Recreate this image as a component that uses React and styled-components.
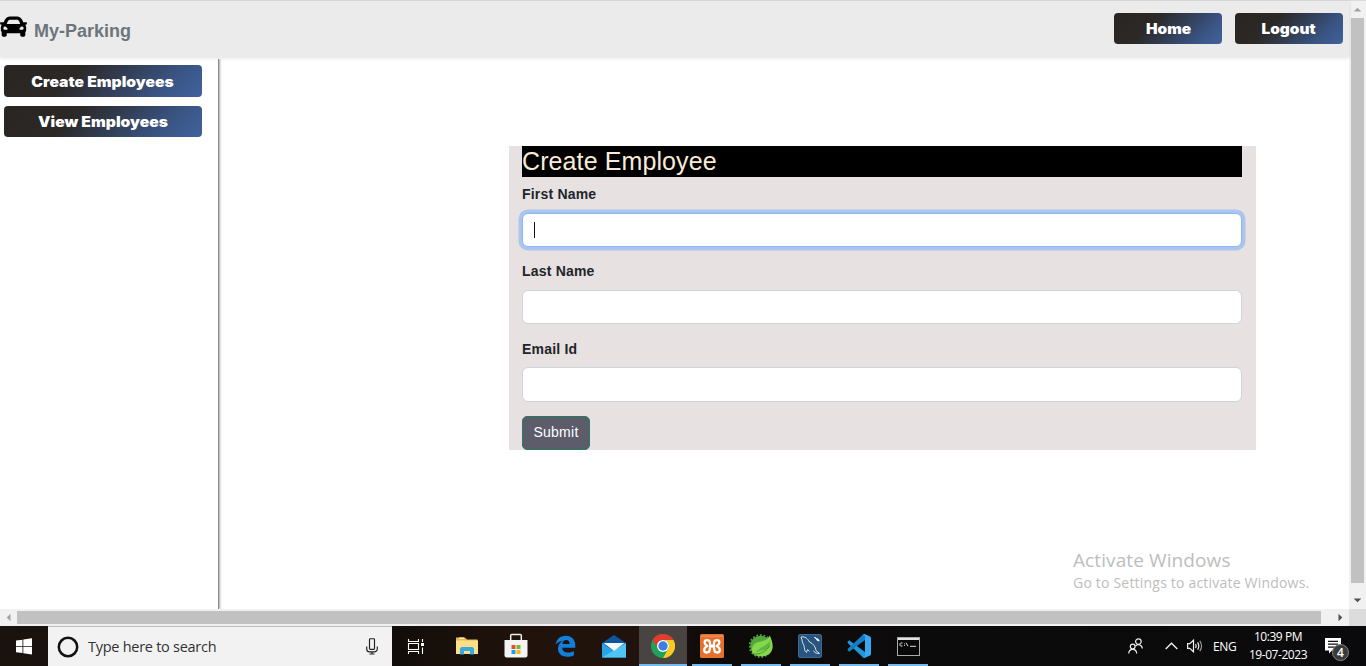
import React from "react";
import styled, { createGlobalStyle } from "styled-components";
import { FaCar } from "react-icons/fa";

const GlobalStyle = createGlobalStyle`
  *, *::before, *::after { box-sizing: border-box; }
  body { margin: 0; overflow: hidden; background: #fff; font-family: "Liberation Sans", Arial, sans-serif; }
  button, input { font-family: inherit; margin: 0; }
`;

const Screen = styled.div`
  width: 1366px;
  height: 666px;
  display: flex;
  flex-direction: column;
  position: relative;
`;
const Browser = styled.div`
  flex: 1;
  display: grid;
  grid-template-columns: 1349px 17px;
  grid-template-rows: 609px 17px;
`;
const Page = styled.div`
  display: flex;
  flex-direction: column;
  border-top: 1px solid #dcdcdc;
  min-height: 0;
`;
const Navbar = styled.header`
  height: 56px;
  flex: none;
  display: flex;
  align-items: flex-start;
  background: #ebebeb;
  box-shadow: 0 1px 4px rgba(0, 0, 0, 0.13);
  position: relative;
  padding: 12px 6px 0 0;
  gap: 13px;
`;
const Brand = styled.div`
  display: flex;
  flex: 1;
  gap: 7px;
  color: #6c757d;
  font-size: 18px;
  font-weight: 700;
  line-height: 22px;
  padding-top: 7px;
  svg { color: #000; width: 27px; height: 27px; margin-top: -7px; }
`;
const GradientButton = styled.button`
  width: ${(p) => p.$width}px;
  height: ${(p) => p.$height || 31}px;
  border: 0;
  border-radius: 4px;
  padding: 0;
  color: #fff;
  background: linear-gradient(135deg, #2a2522 0%, #2b2826 34%, #3a5585 80%, #40629c 100%);
  font: 900 14px/31px Inter, "Arial Black", sans-serif;
  white-space: nowrap;
`;
const WideText = styled.span`
  display: inline-block;
  transform: scaleX(${(p) => p.$scale || 1.1});
`;
const Body = styled.div`
  flex: 1;
  display: flex;
  min-height: 0;
`;
const Sidebar = styled.nav`
  width: 219px;
  margin-top: 2px;
  padding: 6px 0 0 4px;
  display: flex;
  flex-direction: column;
  gap: 9px;
  border-right: 1px solid #8a8a8a;
  box-shadow: 1px 0 2px rgba(0, 0, 0, 0.35);
  clip-path: inset(0 -5px 0 0);
`;
const Content = styled.main`
  flex: 1;
  padding: 89px 0 0 290px;
`;
const Form = styled.form`
  width: 747px;
  height: 304px;
  padding: 0 14px 0 13px;
  background: #e7e1e1;
`;
const Title = styled.h1`
  margin: 0 0 7px;
  height: 31px;
  font-size: 25px;
  line-height: 31px;
  font-weight: 400;
  letter-spacing: 0.1px;
  color: #faebd7;
  background: #000;
`;
const Field = styled.div`
  height: ${(p) => p.$height}px;
`;
const Label = styled.label`
  display: block;
  height: ${(p) => p.$height || 28}px;
  font-size: 14px;
  line-height: 20px;
  font-weight: 700;
  letter-spacing: ${(p) => p.$spacing || "0.2px"};
  color: #212529;
`;
const InputBox = styled.div`
  height: ${(p) => p.$height || 35}px;
  border-radius: 6px;
  border: 1px solid ${(p) => (p.$focused ? "#86b7fe" : "#ced4da")};
  background: #fff;
  box-shadow: ${(p) => (p.$focused ? "0 0 0 3.5px #adc5ec" : "none")};
  padding: 8px 11px;
`;
const Caret = styled.span`
  display: block;
  width: 1px;
  height: 16px;
  background: #111;
`;
const Submit = styled.button`
  display: block;
  width: 68px;
  height: 34px;
  padding: 0 0 2px;
  border: 1px solid #287a60;
  border-radius: 5px;
  background: #5c5c6b;
  color: #fff;
  font-size: 14px;
  letter-spacing: 0.25px;
`;

const VerticalBar = styled.div`
  background: #f1f1f1;
  border-top: 1px solid #dcdcdc;
  display: flex;
  flex-direction: column;
  align-items: center;
`;
const HorizontalBar = styled.div`
  background: #f1f1f1;
  display: flex;
  align-items: center;
`;
const Thumb = styled.div`
  background: #c1c1c1;
  flex: none;
  width: ${(p) => p.$w}px;
  height: ${(p) => p.$h}px;
`;
const ArrowCell = styled.div`
  width: 17px;
  height: 17px;
  display: grid;
  place-items: center;
  margin-top: ${(p) => (p.$end === "y" ? "auto" : 0)};
  margin-left: ${(p) => (p.$end === "x" ? "auto" : 0)};
`;
const Corner = styled.div`
  background: #dcdcdc;
`;
const Arrow = ({ turn = 0, color = "#505050", end }) => (
  <ArrowCell $end={end}>
    <svg width="9" height="9" viewBox="0 0 9 9">
      <path d="M.7 6.5 4.5 2.7l3.8 3.8z" fill={color} transform={`rotate(${turn} 4.5 4.5)`} />
    </svg>
  </ArrowCell>
);

const Watermark = styled.div`
  position: absolute;
  left: 1073px;
  top: 547px;
  font-family: "Open Sans", "Noto Sans", sans-serif;
  font-weight: 400;
  white-space: nowrap;
`;
const WatermarkTitle = styled.div`
  font-size: 19px;
  line-height: 26px;
  letter-spacing: 0.1px;
  color: #bdbdbd;
`;
const WatermarkText = styled.div`
  font-size: 14px;
  line-height: 19px;
  letter-spacing: 0.2px;
  color: #bdbdbd;
`;

const Taskbar = styled.footer`
  height: 40px;
  display: flex;
  background: linear-gradient(90deg, #1a120d 0, #120d0a 392px, #21130c 530px, #20130d 640px, #0d0b0a 710px, #0a0a0c 1366px);
  font-family: "Open Sans", "Noto Sans", sans-serif;
  color: #fff;
`;
const Slot = styled.div`
  width: 48px;
  margin-right: ${(p) => p.$gap ?? 1}px;
  display: grid;
  place-items: center;
  background: ${(p) => (p.$active ? "#494341" : "transparent")};
  background-image: ${(p) => (p.$open ? "linear-gradient(#76b9ed, #76b9ed)" : "none")};
  background-repeat: no-repeat;
  background-position: bottom center;
  background-size: ${(p) => (p.$active ? "48px" : "40px")} 2px;
  svg { display: block; }
`;
const Search = styled.div`
  width: 344px;
  background: #f2f2f2;
  border-top: 1px solid #bdbdbd;
  color: #333;
  display: flex;
  align-items: center;
  padding: 0 14px 0 9px;
`;
const SearchText = styled.span`
  flex: 1;
  padding-left: 9px;
  font-size: 14.5px;
  letter-spacing: -0.27px;
`;
const Tray = styled.div`
  margin-left: auto;
  display: flex;
  align-items: center;
`;
const TrayIcon = styled.div`
  display: flex;
  width: ${(p) => p.$width}px;
`;
const Language = styled.span`
  width: 35px;
  font-size: 12px;
  letter-spacing: -0.3px;
`;
const Clock = styled.div`
  width: 60px;
  text-align: center;
  font-size: 12px;
  line-height: 18px;
  letter-spacing: -0.45px;
  white-space: nowrap;
`;
const Notice = styled.div`
  position: relative;
  width: 48px;
  height: 40px;
  margin-left: 10px;
  padding: 11px 0 0 7px;
`;
const Badge = styled.span`
  position: absolute;
  left: 14px;
  top: 18px;
  width: 17px;
  height: 17px;
  border-radius: 50%;
  border: 1px solid #868686;
  background: #3a3a3a;
  font-size: 12px;
  font-weight: 600;
  line-height: 15px;
  text-align: center;
`;

const WindowsIcon = () => (
  <svg width="16" height="17" viewBox="0 0 16 17" fill="#fff">
    <path d="M0 2.6 6.5 1.7V8H0zM7.3 1.5 16 .3V8H7.3zM0 8.8h6.5v6.3L0 14.2zM7.3 8.8H16v7.7l-8.7-1.2z" />
  </svg>
);
const MicIcon = () => (
  <svg width="12" height="17" viewBox="0 0 12 17" fill="none" stroke="#222" strokeWidth="1.15">
    <rect x="3.500" y=".7" width="5" height="10.600" rx=".8" />
    <path d="M.7 8.500v2.400a3 3 0 0 0 3 3h4.600a3 3 0 0 0 3-3V8.500M6 14v2.300M3.500 16h5" />
  </svg>
);
const TaskViewIcon = () => (
  <svg width="18" height="17" viewBox="0 0 18 17" fill="none" stroke="#fff" strokeWidth="1.1">
    <path d="M1.500 1v2.500h10V1M1.500 16v-2.500h10V16M1.500 5.500h10v6h-10zM15.500 1v3M15.500 9.500V16" />
    <path d="M14 5h3v3h-3z" fill="#fff" stroke="none" />
  </svg>
);
const FolderIcon = () => (
  <svg width="22" height="20" viewBox="0 0 22 20">
    <path d="M0 1.500h9l2 2h10.500V18H0z" fill="#e9b94d" />
    <path d="M0 4.500h22V18H0z" fill="#fbdf86" />
    <path d="M3 1.500h5V3H3z" fill="#fff0b8" />
    <path d="M4 18.500v-6L5.500 11h11l1.500 1.500v6h-4V15H8v3.500z" fill="#38a8e3" />
  </svg>
);
const StoreIcon = () => (
  <svg width="24" height="26" viewBox="0 0 24 26">
    <path d="M6.700 8V2.400q0-1 1-1h8.600q1 0 1 1V8" fill="none" stroke="#eee" strokeWidth="1.500" />
    <path d="M.5 7h23v15.500q0 2-2 2h-19q-2 0-2-2z" fill="#f4f4f4" />
    <path d="M7.500 12h4v4h-4z" fill="#e5532d" />
    <path d="M12.500 12h4v4h-4z" fill="#79b829" />
    <path d="M7.500 17h4v4h-4z" fill="#1c9ee1" />
    <path d="M12.500 17h4v4h-4z" fill="#f6b51c" />
  </svg>
);
const EdgeIcon = () => (
  <svg width="21" height="22" viewBox="0 0 21 22">
    <path fill="#1080dc" d="M.6 9.800C1.200 4.600 5 .7 10.700.7c6.200 0 9.600 4.300 9.600 9.800v2.200H7.200c.2 3.300 2.700 4.900 5.900 4.900 2.300 0 4.100-.6 5.800-1.600v4.200c-1.900 1-4.100 1.500-6.700 1.500-5.800 0-9.200-3.200-9.200-8.200 0-3.400 1.800-6.100 4.900-7.600C4.900 6.100 2.300 7.300.6 9.800zM7.400 9.100h7.200c0-2.700-1.200-4.100-3.500-4.100-2.100 0-3.400 1.600-3.700 4.100z" />
  </svg>
);
const MailIcon = () => (
  <svg width="24" height="23" viewBox="0 0 24 23">
    <path d="M0 8 12 0l12 8v3H0z" fill="#0d559c" />
    <path d="M0 8l12 8 12-8v14.500H0z" fill="#27a5ea" />
    <path d="M24 8v14.500H0z" fill="#4fc4f5" />
    <path d="M1.500 8h21L12 16z" fill="#f4f8fb" />
  </svg>
);
const ChromeIcon = () => (
  <svg width="24" height="24" viewBox="0 0 24 24">
    <circle cx="12" cy="12" r="12" fill="#1fa35a" />
    <path d="M1.600 6A12 12 0 0 1 22.400 6H12a6 6 0 0 0-5.200 9z" fill="#e33b2e" />
    <path d="M22.400 6A12 12 0 0 1 12 24l5.200-9A6 6 0 0 0 12 6z" fill="#fdc921" />
    <circle cx="12" cy="12" r="6" fill="#fff" />
    <circle cx="12" cy="12" r="4.700" fill="#3d7de8" />
  </svg>
);
const XamppIcon = () => (
  <svg width="24" height="24" viewBox="0 0 24 24">
    <rect width="24" height="24" rx="1.500" fill="#e5712e" />
    <path d="M1 2.200h22" stroke="#ee9a68" />
    <path d="M9 12.200h6M9.800 8.200C9.500 5.500 4.600 5.400 4.600 8.400c0 1.600 1.200 2.500 2.800 3.600-2 1-3.200 2.200-3.200 3.900 0 3.500 5.400 3.300 5.400.2 0-1.500.6-2.700 1.400-3.900M14.200 8.200c.3-2.700 5.200-2.800 5.200.2 0 1.600-1.200 2.500-2.800 3.600 2 1 3.200 2.200 3.200 3.900 0 3.500-5.400 3.300-5.400.2 0-1.500-.6-2.700-1.400-3.900M9.800 8.200q0 2.500 1.500 4M14.200 8.200q0 2.500-1.500 4" fill="none" stroke="#fff" strokeWidth="2.300" strokeLinejoin="round" />
  </svg>
);
const SpringIcon = () => (
  <svg width="24" height="24" viewBox="0 0 24 24">
    <circle cx="11.500" cy="12" r="10.300" fill="#55a63e" />
    <circle cx="11.500" cy="12" r="10.900" fill="none" stroke="#55a63e" strokeWidth="1.800" strokeDasharray="1.800 1.800" />
    <path d="M20.800 1.500c4 8.500 4 15.500-1.400 19-4 3-11.500 1.800-14.900-.5-2.800-3-1.900-10.500 4.800-12 5-.8 9-1.700 11.500-6.500z" fill="#84d64b" />
    <path d="M20.500 6.500c-2 5.500-8.500 5.500-14.500 12.300 5.500-2.500 11.500-1.800 15.300-6.800" fill="#63b53f" />
    <path d="M4 20c7 .6 12.500-2 16.500-8" fill="none" stroke="#4b9735" />
  </svg>
);
const MysqlIcon = () => (
  <svg width="24" height="24" viewBox="0 0 24 24">
    <rect x=".5" y=".5" width="23" height="23" rx="1.500" fill="#28557f" stroke="#40678c" />
    <path d="M3 3c4-1 7 2 8.500 5 4 1.500 6 5 6.500 8.500l3.500 3-4-.5-2-2.500M3 3c1.500 3 1 6 3 8.500.5 3 .5 6 2.500 7l1-3 2 2" fill="none" stroke="#d5e0ea" strokeWidth="1" />
    <path d="m16.500 3 2 2 1.200-.2 1.500 2.200-2-.6-.6-1.300z" fill="#fff" stroke="#fff" />
  </svg>
);
const CodeIcon = () => (
  <svg width="24" height="24" viewBox="0 0 24 24">
    <path d="M2.200 6.300.6 7.700v1.200l14.900 14.200 2.500.9V18z" fill="#2196dd" />
    <path d="M2.200 17.700.6 16.300v-1.200L15.500.9 18 0v6z" fill="#147dc4" />
    <path d="m17.500 0 5.500 2.600q1 .5 1 1.500v15.800q0 1-1 1.500L17.500 24q-1 0-2-1 1.800.5 2.500-1V2q-.7-1.500-2.500-1 1-1 2-1z" fill="#35aaf0" />
  </svg>
);
const TerminalIcon = () => (
  <svg width="23" height="19" viewBox="0 0 23 19">
    <rect x=".5" y=".5" width="22" height="18" fill="#080808" stroke="#a9a9a9" />
    <path d="M1 2h21" stroke="#e1e1e1" strokeWidth="2" />
    <path d="M5.500 6H3.700L3 6.700v1.600l.7.700h1.800M7.500 6.500v.8M7.500 8.200V9M9 5.800 11 9.200M13 9.300h6" fill="none" stroke="#ddd" />
  </svg>
);
const PeopleIcon = () => (
  <svg width="15" height="16" viewBox="0 0 15 16" fill="none" stroke="#eee" strokeWidth="1.200">
    <circle cx="10.400" cy="3.600" r="2.800" />
    <path d="M7.500 8q3-2.800 5.800 0 .9 1 1 2.500" />
    <circle cx="4.700" cy="8.600" r="2.400" />
    <path d="M.7 15.500c.3-5.500 7.700-5.500 8 0" />
  </svg>
);
const ChevronIcon = () => (
  <svg width="13" height="8" viewBox="0 0 13 8">
    <path d="M.7 7 6.500 1.200 12.300 7" fill="none" stroke="#eee" strokeWidth="1.400" />
  </svg>
);
const SpeakerIcon = () => (
  <svg width="17" height="14" viewBox="0 0 17 14" fill="none" stroke="#eee" strokeWidth="1.200">
    <path d="M.6 4.700h2.200L6.500 1.200v11.600L2.800 9.300H.6zM8.500 5q1.300 2 0 4M10.600 3.300q2.400 3.700 0 7.400" />
    <path d="M12.800 1.800q3.500 5.200 0 10.400" stroke="#999" />
  </svg>
);
const MessageIcon = () => (
  <svg width="16" height="16" viewBox="0 0 16 16">
    <path d="M0 0h16v12.500H7L4 15.500v-3H0z" fill="#fff" />
    <path d="M3 3.300h10M3 6.200h10M3 9.100h7" stroke="#111" strokeWidth="1.200" />
  </svg>
);

const apps = [
  { name: "Explorer", Icon: FolderIcon },
  { name: "Store", Icon: StoreIcon },
  { name: "Edge", Icon: EdgeIcon },
  { name: "Mail", Icon: MailIcon },
  { name: "Chrome", Icon: ChromeIcon, open: true, active: true },
  { name: "Xampp", Icon: XamppIcon, open: true },
  { name: "Spring", Icon: SpringIcon, open: true },
  { name: "Workbench", Icon: MysqlIcon, open: true },
  { name: "Code", Icon: CodeIcon, open: true },
  { name: "Terminal", Icon: TerminalIcon, open: true },
];

export default function App() {
  return (
    <Screen>
      <GlobalStyle />
      <Browser>
        <Page>
          <Navbar>
            <Brand><FaCar /><span>My-Parking</span></Brand>
            <GradientButton $width={108}><WideText>Home</WideText></GradientButton>
            <GradientButton $width={108}><WideText>Logout</WideText></GradientButton>
          </Navbar>
          <Body>
            <Sidebar>
              <GradientButton $width={198} $height={32}><WideText $scale={1.12}>Create Employees</WideText></GradientButton>
              <GradientButton $width={198}><WideText $scale={1.12}>View Employees</WideText></GradientButton>
            </Sidebar>
            <Content>
              <Form>
                <Title>Create Employee</Title>
                <Field $height={77}>
                  <Label $height={29}>First Name</Label>
                  <InputBox $focused $height={34}><Caret /></InputBox>
                </Field>
                <Field $height={78}>
                  <Label $height={29}>Last Name</Label>
                  <InputBox $height={34} />
                </Field>
                <Field $height={77}>
                  <Label>Email Id</Label>
                  <InputBox />
                </Field>
                <Submit type="button">Submit</Submit>
              </Form>
            </Content>
          </Body>
        </Page>
        <VerticalBar>
          <Arrow color="#a3a3a3" />
          <Thumb $w={13} $h={565} />
          <Arrow turn={180} end="y" />
        </VerticalBar>
        <HorizontalBar>
          <Arrow turn={-90} color="#a3a3a3" />
          <Thumb $w={1304} $h={13} />
          <Arrow turn={90} end="x" />
        </HorizontalBar>
        <Corner />
      </Browser>
      <Watermark>
        <WatermarkTitle>Activate Windows</WatermarkTitle>
        <WatermarkText>Go to Settings to activate Windows.</WatermarkText>
      </Watermark>
      <Taskbar>
        <Slot $gap={0}><WindowsIcon /></Slot>
        <Search>
          <svg width="22" height="22" viewBox="0 0 22 22">
            <circle cx="11" cy="11" r="9.200" fill="none" stroke="#111" strokeWidth="2.500" />
          </svg>
          <SearchText>Type here to search</SearchText>
          <MicIcon />
        </Search>
        <Slot $gap={3}><TaskViewIcon /></Slot>
        {apps.map(({ name, Icon, open, active }) => (
          <Slot key={name} $open={open} $active={active}><Icon /></Slot>
        ))}
        <Tray>
          <TrayIcon $width={37}><PeopleIcon /></TrayIcon>
          <TrayIcon $width={22}><ChevronIcon /></TrayIcon>
          <TrayIcon $width={26}><SpeakerIcon /></TrayIcon>
          <Language>ENG</Language>
          <Clock>10:39 PM<br />19-07-2023</Clock>
          <Notice><MessageIcon /><Badge>4</Badge></Notice>
        </Tray>
      </Taskbar>
    </Screen>
  );
}
